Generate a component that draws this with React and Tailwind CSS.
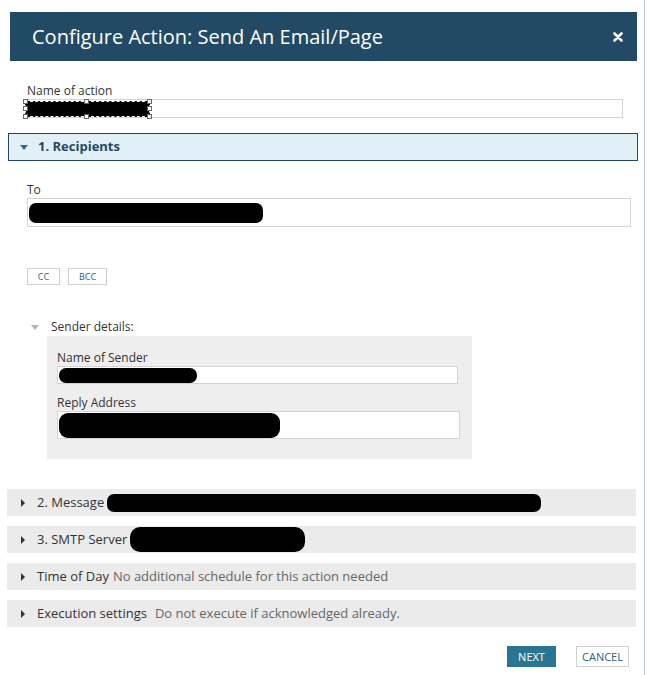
const font = "font-['Open_Sans','Liberation_Sans',sans-serif]";

const Caret = ({ open, className = '' }) =>
  open ? (
    <svg width="8" height="5" viewBox="0 0 8 5" className={className}>
      <path d="M0 0 H8 L4 5 Z" fill="currentColor" />
    </svg>
  ) : (
    <svg width="4" height="8" viewBox="0 0 4 8" className={className}>
      <path d="M0 0 L4 4 L0 8 Z" fill="currentColor" />
    </svg>
  );

const Redacted = ({ w, h, className = '' }) => (
  <span className={`block bg-black rounded-[7px] ${className}`} style={{ width: w, height: h }} />
);

const Handle = ({ className }) => (
  <span className={`absolute w-[5px] h-[5px] bg-white border border-[#666] ${className}`} />
);

const Row = ({ title, children }) => (
  <div className="ml-[7px] w-[629px] h-[27px] bg-[#ebebeb] flex items-center text-[13px]">
    <Caret className="ml-[14px] mr-[12px] text-[#333]" />
    <span className="text-[#333] whitespace-nowrap">{title}</span>
    {children}
  </div>
);

export default function App() {
  return (
    <div className={`w-[647px] h-[675px] bg-white overflow-hidden ${font}`}>
      <div className="w-[645px] h-[675px] border-r border-[#c4d0d9] pt-[12px]">
        {/* header */}
        <div className="ml-[10px] w-[627px] h-[49px] bg-[#234a64] flex items-center justify-between pl-[22px] pr-[14px]">
          <span className="text-white text-[20px] leading-none">Configure Action: Send An Email/Page</span>
          <svg width="10" height="10" viewBox="0 0 10 10">
            <path d="M1.5 1.5 L8.5 8.5 M8.5 1.5 L1.5 8.5" stroke="white" strokeWidth="2.6" strokeLinecap="round" />
          </svg>
        </div>

        {/* name of action */}
        <div className="ml-[27px] mt-[22px] text-[12px] leading-4 text-[#333]">Name of action</div>
        <div className="ml-[27px] w-[596px] h-[19px] border border-[#d4d4d4] relative">
          <div className="absolute left-[-3px] top-[1px] w-[125px] h-[16px] bg-black border border-dashed border-white">
            <Handle className="-left-[3px] -top-[3px]" />
            <Handle className="left-[58px] -top-[3px]" />
            <Handle className="-right-[3px] -top-[3px]" />
            <Handle className="-left-[3px] top-[4px]" />
            <Handle className="-right-[3px] top-[4px]" />
            <Handle className="-left-[3px] -bottom-[3px]" />
            <Handle className="left-[58px] -bottom-[3px]" />
            <Handle className="-right-[3px] -bottom-[3px]" />
          </div>
        </div>

        {/* recipients */}
        <div className="ml-[8px] mt-[15px] w-[630px] h-[28px] bg-[#e1f0f6] border border-[#23475f] flex items-center">
          <Caret open className="ml-[11px] mr-[10px] text-[#2a6a8a]" />
          <span className="text-[13px] font-bold text-[#234a64]">1. Recipients</span>
        </div>

        <div className="ml-[27px] mt-[21px] text-[12px] leading-4 text-[#333]">To</div>
        <div className="ml-[27px] w-[604px] h-[29px] border border-[#d4d4d4] flex items-center pl-[1px]">
          <Redacted w={234} h={20} />
        </div>

        <div className="ml-[27px] mt-[41px] flex gap-[8px]">
          <button className="w-[33px] h-[17px] border border-[#cfcfcf] text-[9px] leading-none text-[#2d5f7e]">CC</button>
          <button className="w-[39px] h-[17px] border border-[#cfcfcf] text-[9px] leading-none text-[#2d5f7e]">BCC</button>
        </div>

        {/* sender details */}
        <div className="mt-[34px] h-[16px] flex items-center text-[12px] text-[#333]">
          <Caret open className="ml-[31px] mr-[12px] text-[#b5b5b5]" />
          <span>Sender details:</span>
        </div>
        <div className="ml-[47px] mt-[1px] w-[425px] bg-[#eeeeee] pl-[10px] pt-[14px] pb-[20px]">
          <div className="text-[12px] leading-4 text-[#333]">Name of Sender</div>
          <div className="w-[401px] h-[18px] bg-white border border-[#d4d4d4] flex items-center pl-[1px]">
            <Redacted w={138} h={15} />
          </div>
          <div className="mt-[11px] text-[12px] leading-4 text-[#333]">Reply Address</div>
          <div className="w-[403px] h-[28px] bg-white border border-[#d4d4d4] flex items-center pl-[1px]">
            <Redacted w={221} h={25} className="rounded-[9px]" />
          </div>
        </div>

        {/* collapsed sections */}
        <div className="mt-[30px] flex flex-col gap-[10px]">
          <Row title="2. Message">
            <Redacted w={434} h={18} className="ml-[3px]" />
          </Row>
          <Row title="3. SMTP Server">
            <Redacted w={175} h={25} className="ml-[3px] rounded-[10px]" />
          </Row>
          <Row title="Time of Day">
            <span className="ml-[4px] text-[#666] whitespace-nowrap">No additional schedule for this action needed</span>
          </Row>
          <Row title="Execution settings">
            <span className="ml-[8px] text-[#666] whitespace-nowrap">Do not execute if acknowledged already.</span>
          </Row>
        </div>

        {/* footer buttons */}
        <div className="mt-[19px] ml-[507px] flex gap-[20px]">
          <button className="w-[49px] h-[21px] bg-[#2a7590] text-white text-[11px] leading-none">NEXT</button>
          <button className="w-[53px] h-[21px] border border-[#d0d0d0] text-[#2d5f7e] text-[11px] leading-none">CANCEL</button>
        </div>
      </div>
    </div>
  );
}
